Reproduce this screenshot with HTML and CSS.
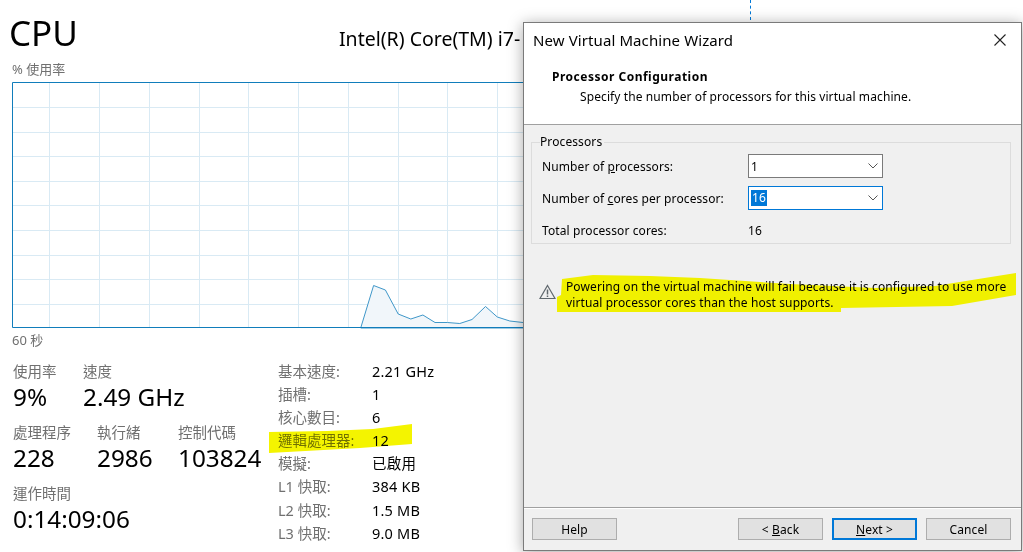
FILE: index.html
```html
<!DOCTYPE html>
<html lang="en">
<head>
    <meta charset="UTF-8">
    <title>CPU / New Virtual Machine Wizard</title>
    <link rel="stylesheet" href="styles.css">
</head>
<body>

<!-- Task manager CPU page, behind the dialog -->
<div class="perf">
    <div class="perf-head">
        <h1>CPU</h1>
        <div class="cpu-name">Intel(R) Core(TM) i7-</div>
    </div>
    <div class="axis-label axis-top">% 使用率</div>
    <svg class="chart" width="518" height="247" viewBox="0 0 518 247">
        <g class="grid">
            <path d="M37.500 0V246M87.500 0V246M137.500 0V246M187.500 0V246M236.500 0V246M286.500 0V246M336.500 0V246M386.500 0V246M435.500 0V246M485.500 0V246"/>
            <path d="M0 25.500H518M0 50.500H518M0 74.500H518M0 99.500H518M0 123.500H518M0 148.500H518M0 173.500H518M0 197.500H518M0 222.500H518"/>
        </g>
        <path class="area" d="M348.700 246L361.600 203.500L373.400 208L386.200 232L398.800 237L410.900 233L423 240.500L435.300 240.500L447.800 241.500L460 237.500L473.500 224.500L485.300 235L497.800 239L511 240.500L518 241V246Z"/>
        <path class="border" d="M518 .5H.5V245.500H518"/>
    </svg>
    <div class="axis-label axis-bottom">60 秒</div>

    <div class="stats">
        <div class="live">
            <div class="live-row">
                <div class="stat stat-usage"><span>使用率</span><b>9%</b></div>
                <div class="stat"><span>速度</span><b>2.49 GHz</b></div>
            </div>
            <div class="live-row">
                <div class="stat stat-proc"><span>處理程序</span><b>228</b></div>
                <div class="stat stat-thread"><span>執行緒</span><b>2986</b></div>
                <div class="stat"><span>控制代碼</span><b>103824</b></div>
            </div>
            <div class="live-row">
                <div class="stat"><span>運作時間</span><b>0:14:09:06</b></div>
            </div>
        </div>
        <dl class="specs">
            <dt>基本速度:</dt><dd>2.21 GHz</dd>
            <dt>插槽:</dt><dd>1</dd>
            <dt>核心數目:</dt><dd>6</dd>
            <dt>邏輯處理器:</dt><dd>12</dd>
            <dt>模擬:</dt><dd>已啟用</dd>
            <dt>L1 快取:</dt><dd>384 KB</dd>
            <dt>L2 快取:</dt><dd>1.5 MB</dd>
            <dt>L3 快取:</dt><dd>9.0 MB</dd>
        </dl>
    </div>
</div>

<div class="dash"></div>

<!-- Wizard window -->
<div class="wizard">
    <div class="wizard-top">
        <div class="title-bar">
            <span>New Virtual Machine Wizard</span>
            <svg class="close" width="12" height="12" viewBox="0 0 12 12"><path d="M.5 .5L11.500 11.500M11.500 .5L.5 11.500"/></svg>
        </div>
        <div class="page-title">Processor Configuration</div>
        <div class="page-sub">Specify the number of processors for this virtual machine.</div>
    </div>
    <div class="wizard-body">
        <fieldset class="group">
            <legend>Processors</legend>
            <div class="field">
                <label>Number of <u>p</u>rocessors:</label>
                <div class="combo"><span>1</span><svg width="10" height="6" viewBox="0 0 10 6"><path d="M.5 .5L5 5L9.500 .5"/></svg></div>
            </div>
            <div class="field">
                <label>Number of <u>c</u>ores per processor:</label>
                <div class="combo combo-focus"><span class="selected">16</span><svg width="10" height="6" viewBox="0 0 10 6"><path d="M.5 .5L5 5L9.500 .5"/></svg></div>
            </div>
            <div class="field">
                <label>Total processor cores:</label>
                <div class="total">16</div>
            </div>
        </fieldset>
        <div class="warning">
            <svg width="17" height="16" viewBox="0 0 17 16"><path class="warn-tri" d="M8.500 1.500L16 14.500H1Z"/><path class="warn-mark" d="M8.500 5.500V10.500M8.500 11.500V13"/></svg>
            <p>Powering on the virtual machine will fail because it is configured to use more virtual processor cores than the host supports.</p>
        </div>
    </div>
    <div class="wizard-foot">
        <button>Help</button>
        <div class="foot-right">
            <button>&lt; <u>B</u>ack</button>
            <button class="default"><u>N</u>ext &gt;</button>
            <button>Cancel</button>
        </div>
    </div>
</div>

<!-- Yellow marker strokes drawn over the screenshot -->
<svg class="marker" width="1023" height="552" viewBox="0 0 1023 552">
    <path d="M269 432L327 431L373 429L412 424V444L360 448L269 453Z"/>
    <path d="M562 279L593 275L650 276L700 278L790 284L875 288L935 286L972 280L1016 273V295L952 306L841 308V312H557V297L561 295Z"/>
</svg>

</body>
</html>
```

FILE: styles.css
```css
html, body {
    margin: 0;
    padding: 0;
    height: 100%;
    overflow: hidden;
    background: #fff;
}

body {
    position: relative;
    font-family: "Noto Sans", "Noto Sans CJK TC", sans-serif;
    color: #000;
}

.perf {
    width: 530px;
    padding-left: 12px;
    box-sizing: border-box;
}

.perf-head {
    display: flex;
    height: 60px;
    margin-left: -3px;
}

h1 {
    margin: 0;
    flex: none;
    width: 330px;
    font-size: 35px;
    font-weight: 400;
    line-height: 66px;
    height: 60px;
}

.cpu-name {
    font-size: 19.500px;
    line-height: 78px;
    white-space: nowrap;
}

.axis-label {
    font-size: 13px;
    line-height: 16px;
    color: #707070;
}

.axis-top {
    height: 22px;
    padding-top: 1px;
    box-sizing: border-box;
}

.axis-bottom {
    height: 25px;
    padding-top: 3px;
    box-sizing: border-box;
}

.chart {
    display: block;
}

.grid path {
    fill: none;
    stroke: #d9eaf4;
    stroke-width: 1;
}

.area {
    fill: #f1f6fa;
    stroke: #3f97c9;
    stroke-width: 1;
}

.border {
    fill: none;
    stroke: #117dbb;
    stroke-width: 1;
}

.stats {
    display: flex;
    margin: 7px 0 0 1px;
}

.live {
    width: 265px;
    flex: none;
}

.live-row {
    display: flex;
    height: 61px;
}

.stat span {
    display: block;
    font-size: 14.500px;
    line-height: 20px;
    color: #707070;
}

.stat b {
    display: block;
    font-size: 24.300px;
    font-weight: 400;
    line-height: 32px;
    white-space: nowrap;
}

.stat-usage { width: 70px; }
.stat-proc { width: 84px; }
.stat-thread { width: 81px; }

.specs {
    display: grid;
    grid-template-columns: 94px auto;
    grid-auto-rows: 23.100px;
    margin: 0;
    font-size: 14.500px;
    line-height: 20px;
}

.specs dt {
    color: #707070;
}

.specs dd {
    margin: 0;
    letter-spacing: 0.2px;
}

.dash {
    position: absolute;
    left: 750px;
    top: 0;
    height: 20px;
    border-left: 1px dashed #0078d7;
}

/* wizard window */
.wizard {
    position: absolute;
    left: 523px;
    top: 22px;
    width: 499px;
    height: 529px;
    box-sizing: border-box;
    display: flex;
    flex-direction: column;
    border: 1px solid #7a7a7a;
    background: #f0f0f0;
    box-shadow: 0 2px 14px rgba(0, 0, 0, 0.35);
    font-size: 12px;
    letter-spacing: 0.1px;
    color: #000;
}

.wizard-top {
    height: 102px;
    flex: none;
    box-sizing: border-box;
    background: #fff;
    border-bottom: 1px solid #a0a0a0;
}

.title-bar {
    display: flex;
    justify-content: space-between;
    align-items: center;
    height: 33px;
    padding: 0 15px 0 9px;
    font-size: 15px;
}

.close path {
    fill: none;
    stroke: #222;
    stroke-width: 1.100;
}

.page-title {
    margin: 12px 0 0 28px;
    font-weight: 700;
    letter-spacing: 0.5px;
    line-height: 17px;
}

.page-sub {
    margin: 3px 0 0 56px;
    line-height: 17px;
}

.wizard-body {
    flex: 1;
    padding: 9px 10px 0 7px;
}

.group {
    margin: 0;
    padding: 0 0 0 10px;
    height: 110px;
    box-sizing: border-box;
    border: 1px solid #dcdcdc;
}

.group legend {
    padding: 0 2px 0 0;
    margin-left: -2px;
    line-height: 16px;
}

.field {
    display: flex;
    align-items: center;
    height: 32px;
}

.field label {
    width: 206px;
    flex: none;
}

.combo {
    display: flex;
    justify-content: space-between;
    align-items: center;
    width: 135px;
    height: 24px;
    box-sizing: border-box;
    padding: 0 4px 0 2px;
    background: #fff;
    border: 1px solid #7a7a7a;
}

.combo svg path {
    fill: none;
    stroke: #555;
}

.combo-focus {
    border-color: #0078d7;
}

.selected {
    background: #0078d7;
    color: #fff;
    padding: 0 1px;
    line-height: 16px;
}

.warning {
    display: flex;
    margin: 35px 0 0 8px;
}

.warning svg {
    flex: none;
    margin: 5px 10px 0 0;
}

.warn-tri {
    fill: none;
    stroke: #60686e;
    stroke-width: 1.200;
}

.warn-mark {
    fill: none;
    stroke: #60686e;
    stroke-width: 1.500;
}

.warning p {
    margin: 0;
    width: 455px;
    line-height: 16px;
}

.wizard-foot {
    display: flex;
    justify-content: space-between;
    align-items: flex-start;
    height: 43px;
    flex: none;
    box-sizing: border-box;
    padding: 10px 10px 0 8px;
    border-top: 1px solid #a0a0a0;
    box-shadow: inset 0 1px 0 #fff;
}

.foot-right {
    display: flex;
    gap: 9px;
}

button {
    width: 85px;
    height: 22px;
    padding: 0;
    font: inherit;
    letter-spacing: inherit;
    color: #000;
    background: #e1e1e1;
    border: 1px solid #adadad;
}

button.default {
    border: 2px solid #0078d7;
}

.marker {
    position: absolute;
    left: 0;
    top: 0;
    pointer-events: none;
}

.marker path {
    fill: #f4f400;
    mix-blend-mode: darken;
}
```
